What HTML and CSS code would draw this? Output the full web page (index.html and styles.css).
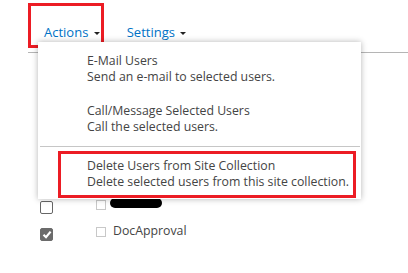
FILE: index.html
```html
<!DOCTYPE html>
<html lang="en">
<head>
  <meta charset="UTF-8">
  <title>People and Groups</title>
  <link rel="stylesheet" href="styles.css">
</head>
<body>

<div class="toolbar">
  <div class="tab tab-marked">Actions <span class="caret"></span></div>
  <div class="tab">Settings <span class="caret"></span></div>
</div>

<div class="list">
  <div class="row">
    <span class="check"></span>
    <span class="mini-check"></span>
    <span class="redacted"></span>
  </div>
  <div class="row">
    <span class="check checked">
      <svg width="10" height="9" viewBox="0 0 10 9"><path d="M1.5 4.8 L4 7.2 L8.6 1.6" fill="none" stroke="#fff" stroke-width="2.2"/></svg>
    </span>
    <span class="mini-check"></span>
    <span class="name">DocApproval</span>
  </div>
</div>

<div class="menu">
  <div class="menu-item">
    <div>E-Mail Users</div>
    <div>Send an e-mail to selected users.</div>
  </div>
  <div class="menu-item">
    <div>Call/Message Selected Users</div>
    <div>Call the selected users.</div>
  </div>
  <div class="menu-sep"></div>
  <div class="menu-item item-marked">
    <div>Delete Users from Site Collection</div>
    <div>Delete selected users from this site collection.</div>
  </div>
</div>

</body>
</html>
```

FILE: styles.css
```css
body {
  margin: 0;
  font-family: "Open Sans", Arial, sans-serif;
  background: white;
  color: #444;
  position: relative;
  height: 273px;
  overflow: hidden;
}

.toolbar {
  display: flex;
  align-items: flex-start;
  margin-left: 28px;
  padding-top: 3px;
  height: 49px;
  border-bottom: 1px solid #b5b5b5;
}

.tab {
  color: #0072c6;
  font-size: 13px;
  line-height: 18px;
  padding: 17px 1px 4px 13px;
  border: 3px solid transparent;
  white-space: nowrap;
}

.tab-marked {
  border-color: #ec1c24;
  margin-right: 7px;
}

.caret {
  display: inline-block;
  width: 0;
  height: 0;
  margin-left: 2px;
  vertical-align: 2px;
  border-left: 3px solid transparent;
  border-right: 3px solid transparent;
  border-top: 3px solid #222;
}

.list {
  padding-top: 140px;
}

.row {
  display: flex;
  align-items: flex-start;
  height: 27px;
}

.check {
  width: 11px;
  height: 11px;
  margin: 8px 0 0 40px;
  border: 1px solid #666;
  border-radius: 2px;
  display: flex;
  align-items: center;
  justify-content: center;
}

.checked {
  background: #6b6b6b;
  border-color: #6b6b6b;
}

.mini-check {
  width: 8px;
  height: 8px;
  margin: 7px 0 0 43px;
  border: 1px solid #c8c8c8;
}

.redacted {
  width: 52px;
  height: 10px;
  margin: 5px 0 0 4px;
  background: #000;
  border-radius: 5px;
}

.name {
  font-size: 12.3px;
  line-height: 16px;
  margin: 3px 0 0 7px;
}

/* dropdown */
.menu {
  position: absolute;
  left: 38px;
  top: 42px;
  width: 323px;
  height: 146px;
  padding-top: 11px;
  background: white;
  box-shadow: 0 0 6px rgba(0,0,0,0.3);
  font-size: 12.3px;
  line-height: 16px;
  color: #444;
}

.menu-item {
  padding-left: 49px;
  margin-bottom: 18px;
  white-space: nowrap;
}

.menu-sep {
  height: 1px;
  background: #c6c6c6;
  margin: -7px 1px 4px 2px;
}

.item-marked {
  margin: 0 5px 0 20px;
  padding: 4px 0 5px 26px;
  border: 3px solid #ec1c24;
}
```
